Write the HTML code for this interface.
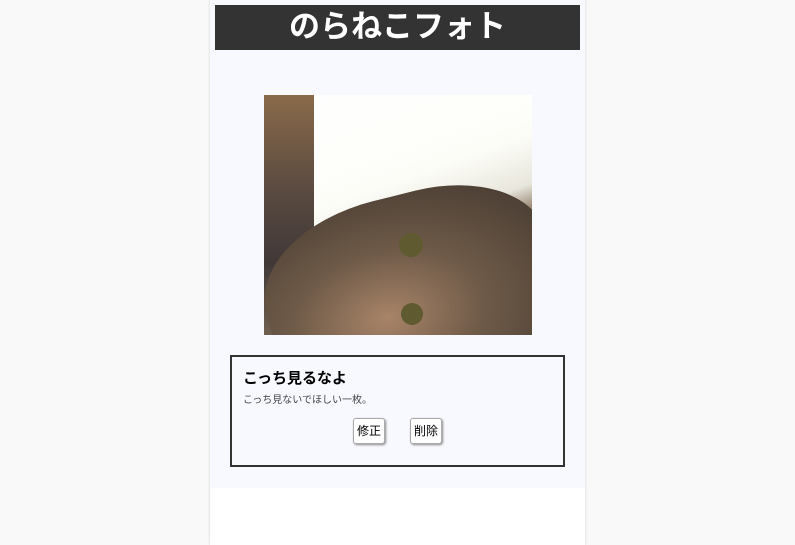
<!DOCTYPE html>
<html><head><meta charset="utf-8"><style>
html,body{margin:0;padding:0;background:#f9f9f9;width:795px;height:545px;overflow:hidden;font-family:"Liberation Sans","Noto Sans CJK JP",sans-serif;}
.wrap{position:absolute;left:210px;top:0;width:375px;height:545px;background:#fff;box-shadow:0 0 3px rgba(0,0,0,.15);}
.inner{position:absolute;left:0;top:0;width:375px;height:488px;background:#f8f9ff;}
.hd{position:absolute;left:5px;top:5px;width:365px;height:45px;background:#333;color:#fff;font-weight:bold;font-size:31px;text-align:center;line-height:44px;}
.img{position:absolute;left:54px;top:95px;width:268px;height:240px;overflow:hidden;
background:linear-gradient(160deg,#fff 0%,#fdfdf8 40%,#e8e6dc 55%,#9a8a76 62%,#7d6a55 75%,#5f4f40 100%);}
.img .a{position:absolute;left:0;top:0;width:50px;height:240px;background:linear-gradient(180deg,#8a6a4a,#5a4a40 40%,#403838 70%,#706050);}
.img .cat{position:absolute;left:0px;top:100px;width:290px;height:180px;border-radius:45% 40% 0 0;background:radial-gradient(ellipse at 40% 65%,#a88468 0%,#6e5a48 40%,#3e342c 100%);transform:rotate(-14deg);}
.img .e1{position:absolute;left:135px;top:138px;width:24px;height:24px;border-radius:50%;background:#5f5a30;}
.img .e2{position:absolute;left:137px;top:208px;width:22px;height:22px;border-radius:50%;background:#5f5a30;}
.card{position:absolute;left:20px;top:355px;width:331px;height:108px;border:2px solid #333;}
.card h2{margin:0;position:absolute;left:11px;top:10px;font-size:15px;font-weight:bold;color:#000;}
.card p{margin:0;position:absolute;left:11px;top:34px;font-size:10px;color:#444;}
.btn{position:absolute;top:61px;height:24px;padding:0 3px;background:#fff;border:1px solid #aaa;border-radius:3px;box-shadow:1px 1px 2px #888;font-size:12px;line-height:24px;color:#000;}
</style></head><body>
<div class="wrap"><div class="inner">
<div class="hd">のらねこフォト</div>
<div class="img"><div class="a"></div><div class="cat"></div><div class="e1"></div><div class="e2"></div></div>
<div class="card"><h2>こっち見るなよ</h2><p>こっち見ないでほしい一枚。</p>
<div class="btn" style="left:121px">修正</div><div class="btn" style="left:178px">削除</div></div>
</div></div>
</body></html>
